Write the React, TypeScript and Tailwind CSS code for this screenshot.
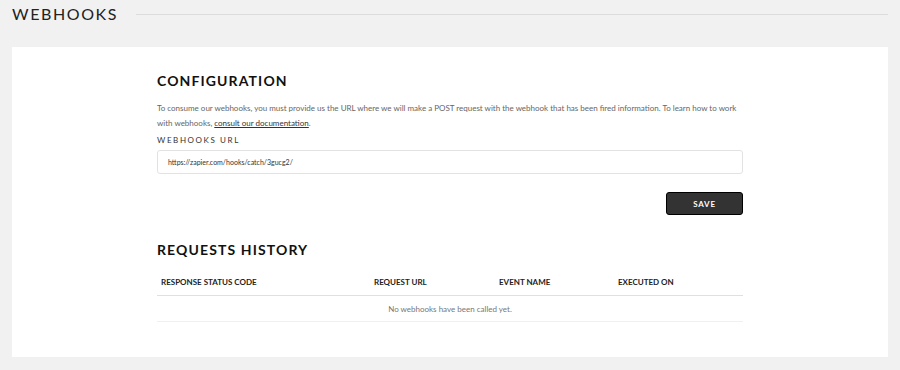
import React from "react";

export default function App() {
  const font = { fontFamily: "Lato, 'Open Sans', sans-serif" };
  return (
    <div className="min-h-[370px] w-[900px] bg-[#f1f1f1] text-[#222]" style={font}>
      <div className="flex items-center gap-[18px] pl-[12px] pr-[12px] pt-[3px]">
        <h1 className="text-[16px] leading-[22px] tracking-[0.1em] font-normal text-[#222]">WEBHOOKS</h1>
        <div className="h-px flex-1 bg-[#dcdcdc]" />
      </div>
      <div className="mx-[12px] mt-[22px] bg-white pt-[25px] pb-[35px]">
        <div className="ml-[145px] w-[586px]">
          <h2 className="text-[14px] leading-[18px] font-bold tracking-[0.08em] text-[#111]">CONFIGURATION</h2>
          <p className="mt-[11px] text-[8px] leading-[15px] text-[#666]">
            To consume our webhooks, you must provide us the URL where we will make a POST request with the webhook that has been fired information. To learn how to work with webhooks, <a className="text-[#333] underline">consult our documentation</a>.
          </p>
          <div className="mt-[4px] text-[8px] leading-[10px] tracking-[0.2em] text-[#333]">WEBHOOKS URL</div>
          <div className="mt-[5px] flex h-[24px] items-center rounded-[3px] border border-[#e2e2e2] px-[10px] text-[7px] text-[#333]">
            https://zapier.com/hooks/catch/3gucg2/
          </div>
          <div className="mt-[18px] flex justify-end">
            <button className="h-[23px] w-[77px] rounded-[3px] border border-black bg-[#333] text-[8px] font-bold tracking-[0.1em] text-white">
              SAVE
            </button>
          </div>
          <h2 className="mt-[26px] text-[14px] leading-[18px] font-bold tracking-[0.08em] text-[#111]">REQUESTS HISTORY</h2>
          <div className="mt-[18px]">
            <div className="flex border-b border-[#e0e0e0] pb-[8px] text-[8px] leading-[10px] font-bold text-[#222]">
              <div className="w-[217px] pl-[4px]">RESPONSE STATUS CODE</div>
              <div className="w-[125px]">REQUEST URL</div>
              <div className="w-[119px]">EVENT NAME</div>
              <div className="flex-1">EXECUTED ON</div>
            </div>
            <div className="flex h-[26px] items-center justify-center border-b border-[#f0f0f0] text-[8px] text-[#777]">
              No webhooks have been called yet.
            </div>
          </div>
        </div>
      </div>
    </div>
  );
}
